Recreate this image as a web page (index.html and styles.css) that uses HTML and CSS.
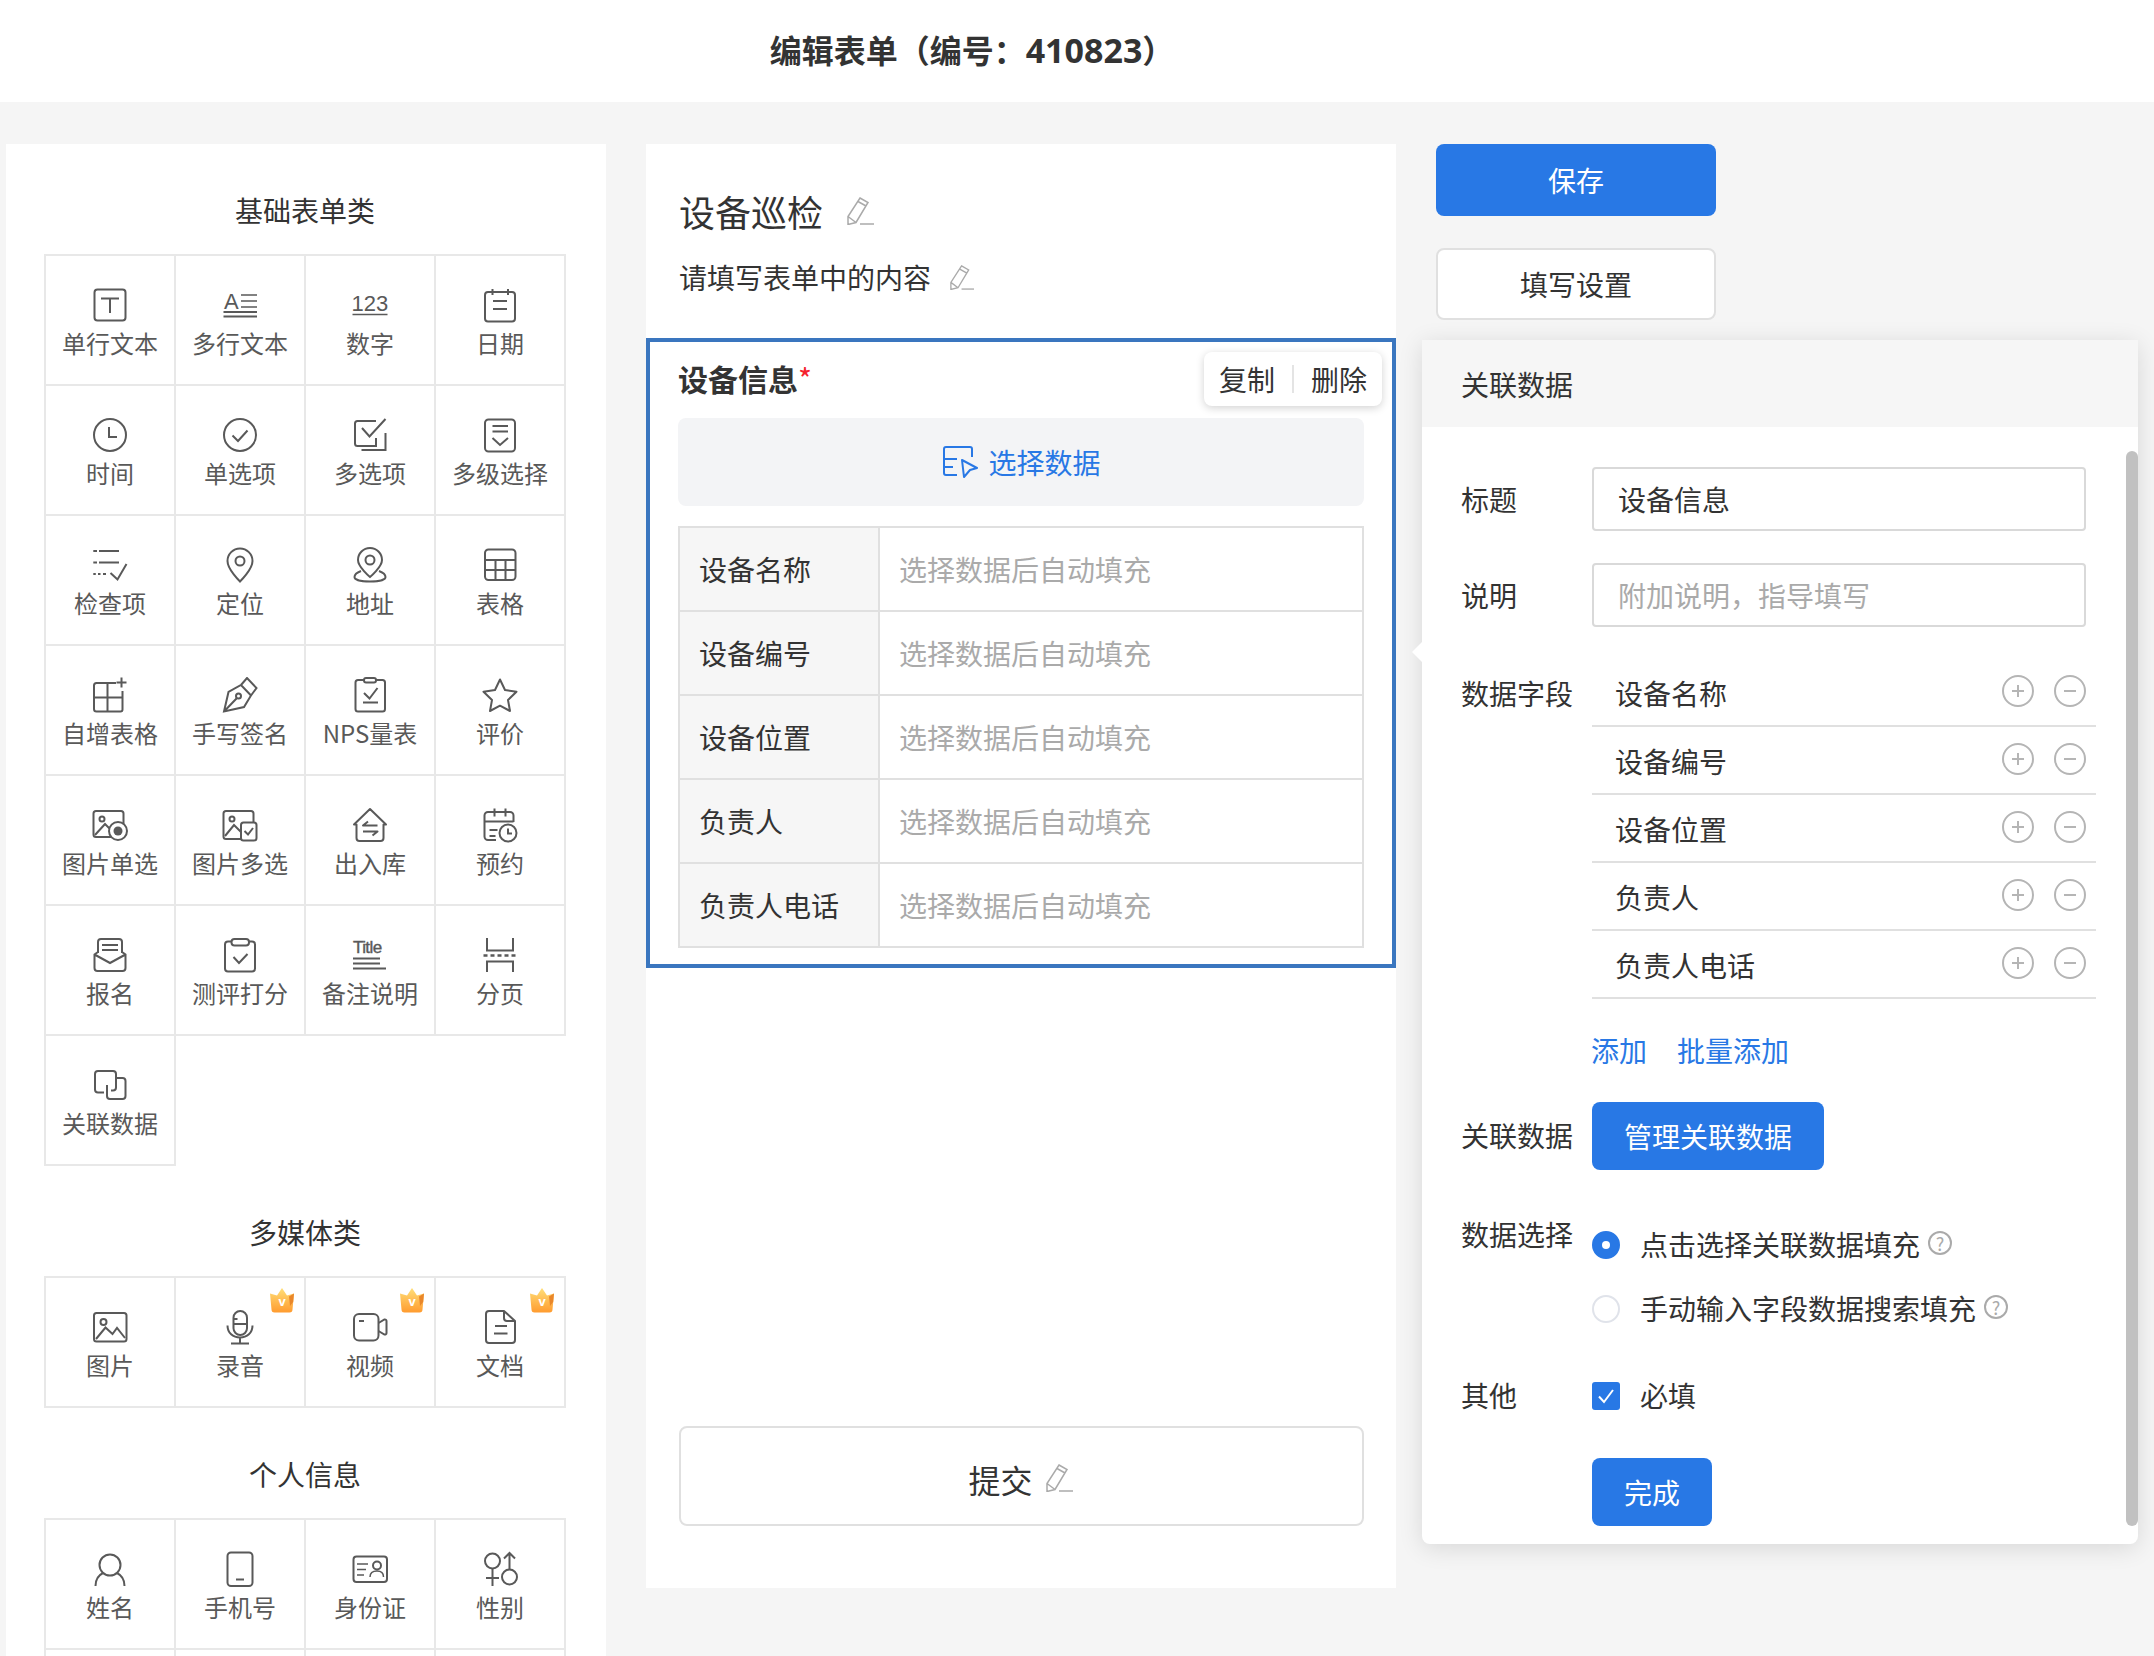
FILE: index.html
```html
<!DOCTYPE html>
<html lang="zh-CN">
<head>
<meta charset="utf-8">
<title>编辑表单</title>
<link rel="stylesheet" href="styles.css">
</head>
<body>
<header class="topbar"><h1 class="page-title">编辑表单（编号：<span class="num">410823</span>）</h1></header>
<main class="workspace">
  <aside class="palette">
    <section class="group">
      <h2 class="group-title">基础表单类</h2>
      <div class="grid">
        <div class="cell"><svg class="ic" viewBox="0 0 36 36"><rect x="2.5" y="2.5" width="31" height="31" rx="3"/><path d="M9 11.5h18M18 11.5v14.5"/></svg><span>单行文本</span></div>
        <div class="cell"><svg class="ic" viewBox="0 0 36 36"><text class="ic-text" x="2" y="21.5" font-size="22">A</text><path class="thin" d="M19 8h16M19 14h16M19 20h16"/><path d="M1.5 25h33.5M1.5 29.5h33.5"/></svg><span>多行文本</span></div>
        <div class="cell"><svg class="ic" viewBox="0 0 36 36"><text class="ic-text" x="-0.500" y="24" font-size="22">123</text><path class="thin" d="M0.5 27.500h35"/></svg><span>数字</span></div>
        <div class="cell"><svg class="ic" viewBox="0 0 36 36"><rect x="3" y="5" width="30" height="29.5" rx="3"/><path d="M10.5 2v6M26 2v6M11 14h14M11 22h14"/></svg><span>日期</span></div>

        <div class="cell"><svg class="ic" viewBox="0 0 36 36"><circle cx="18" cy="18" r="16"/><path d="M17 10v10h8"/></svg><span>时间</span></div>
        <div class="cell"><svg class="ic" viewBox="0 0 36 36"><circle cx="18" cy="18" r="16"/><path d="M10.5 18.5l5.5 5.5 9.5-10.5"/></svg><span>单选项</span></div>
        <div class="cell"><svg class="ic" viewBox="0 0 36 36"><path d="M24 4H5.5a2.5 2.5 0 0 0-2.5 2.5v20A2.5 2.5 0 0 0 5.5 29h18.500v-8M10 11l7.500 8.500L33.500 2M33.500 16v17h-24"/></svg><span>多选项</span></div>
        <div class="cell"><svg class="ic" viewBox="0 0 36 36"><rect x="3" y="2.500" width="30" height="32" rx="3.500"/><path d="M10.500 9h15.500M10.500 14.500h15.500M10.500 21l7.500 7 8-7"/></svg><span>多级选择</span></div>

        <div class="cell"><svg class="ic" viewBox="0 0 36 36"><path d="M1.300 4h3.700M7 4h20M1.300 15.500h3.700M7 15.500h20M1.300 27h2.500M6 27h2.500M11 27h3"/><path d="M18.500 26l7 6.500 9-15.500"/></svg><span>检查项</span></div>
        <div class="cell"><svg class="ic" viewBox="0 0 36 36"><path d="M18 34.500S5.500 22.500 5.500 14a12.500 12.500 0 0 1 25 0c0 8.500-12.500 20.500-12.500 20.500z"/><circle cx="18" cy="14" r="4.500"/></svg><span>定位</span></div>
        <div class="cell"><svg class="ic" viewBox="0 0 36 36"><path d="M18 30S6 20 6 13a12 12 0 0 1 24 0c0 7-12 17-12 17z"/><circle cx="18" cy="13" r="4.500"/><path d="M9 24c-4 1.500-6.500 3.500-6.500 6 0 3 7 4.500 15.500 4.500s15.500-1.500 15.500-4.500c0-2.500-2.500-4.500-6.500-6"/></svg><span>地址</span></div>
        <div class="cell"><svg class="ic" viewBox="0 0 36 36"><rect x="3" y="2.500" width="30.500" height="30.500" rx="3.500"/><path d="M3 13h30.500M3 23h30.500M13.500 13v20M23.500 13v20"/></svg><span>表格</span></div>

        <div class="cell"><svg class="ic" viewBox="0 0 36 36"><path d="M24 6H4.500A2.500 2.500 0 0 0 2 8.500v23.500a2.500 2.500 0 0 0 2.500 2.500h24a2 2 0 0 0 2-2V14M15.500 6v28.500M2 20.500h28.500M29.500 0.500v10M24.500 5.500h10"/></svg><span>自增表格</span></div>
        <div class="cell"><svg class="ic" viewBox="0 0 36 36"><path d="M2 34.500l4.500-19.500L19 8l10 10.500-7 11.500zM19 8l6-7 9.500 10-5.500 7.500M2 34.500l12.500-13"/><circle cx="16.500" cy="19" r="2.500"/></svg><span>手写签名</span></div>
        <div class="cell"><svg class="ic" viewBox="0 0 36 36"><rect x="3.500" y="3" width="29.500" height="31.500" rx="2.500"/><rect class="solid" x="12" y="1" width="12" height="4.500" rx="2"/><path d="M12 16l5.500 5.500 8-10.500M11 25.500h15"/></svg><span>NPS量表</span></div>
        <div class="cell"><svg class="ic" viewBox="0 0 36 36"><path stroke-linejoin="round" d="M18 2.500l5 10.500 11.500 1.700-8.500 8.300 2 11-10-5.300-10 5.300 2-11-8.500-8.300L13 13z"/></svg><span>评价</span></div>

        <div class="cell"><svg class="ic" viewBox="0 0 36 36"><rect x="1.500" y="4" width="30" height="26" rx="2.500"/><circle cx="10" cy="12" r="2.500"/><path d="M3 28l10-11 7 7"/><circle class="solid" cx="26" cy="24" r="9"/><circle class="dot" cx="26" cy="24" r="4.500"/></svg><span>图片单选</span></div>
        <div class="cell"><svg class="ic" viewBox="0 0 36 36"><rect x="1.500" y="4" width="30" height="28" rx="2.500"/><circle cx="10" cy="12" r="2.500"/><path d="M3 29l9-11 7 7"/><rect class="solid" x="19" y="15.500" width="15.500" height="18" rx="2.500"/><path d="M22.500 24l3.500 3.500 5-6.500"/></svg><span>图片多选</span></div>
        <div class="cell"><svg class="ic" viewBox="0 0 36 36"><path stroke-linejoin="round" d="M18 2l16 15.500h-2.500V31a3 3 0 0 1-3 3H7.500a3 3 0 0 1-3-3V17.500H2zM25.500 18.500H11l5-4M11 24.500h14.500l-5 4"/></svg><span>出入库</span></div>
        <div class="cell"><svg class="ic" viewBox="0 0 36 36"><path d="M14 33H6a3.500 3.500 0 0 1-3.500-3.500V8.500A3.500 3.500 0 0 1 6 5h22a3.500 3.500 0 0 1 3.500 3.500V15M12.500 1.500v8M23.500 1.500v8M2.500 14.500h29M7.500 23h8M7.500 29h6"/><circle class="solid" cx="26" cy="26" r="8.500"/><path d="M26 21.500v5h4"/></svg><span>预约</span></div>

        <div class="cell"><svg class="ic" viewBox="0 0 36 36"><path d="M6 16V5a3 3 0 0 1 3-3h18a3 3 0 0 1 3 3v11M10 8h16M10 13h16"/><path d="M6 15l-3.500 2.500V31a3 3 0 0 0 3 3h25a3 3 0 0 0 3-3V17.500L30 15M2.500 17.500L18 26l15.500-8.500"/></svg><span>报名</span></div>
        <div class="cell"><svg class="ic" viewBox="0 0 36 36"><rect x="3" y="4.500" width="30" height="30" rx="3"/><rect class="solid" x="9.500" y="2" width="17.500" height="6.500" rx="3"/><path d="M11.500 20l5.500 6 8.500-9"/></svg><span>测评打分</span></div>
        <div class="cell"><svg class="ic" viewBox="0 0 36 36"><text class="ic-title" x="1" y="16" font-size="17">Title</text><path d="M1 21.500h27M1 26.500h27M1 31.500h33"/></svg><span>备注说明</span></div>
        <div class="cell"><svg class="ic" viewBox="0 0 36 36"><path d="M5 1v12.500h26V1M5 35V24.500h26V35"/><path class="dash" d="M1.500 18.500h33"/></svg><span>分页</span></div>

        <div class="cell"><svg class="ic" viewBox="0 0 36 36"><path d="M12 25.500H6a3 3 0 0 1-3-3V7a3 3 0 0 1 3-3h15a3 3 0 0 1 3 3v13.500a3 3 0 0 1-3 3h-2"/><path d="M15 18v11a3 3 0 0 0 3 3h12.500a3 3 0 0 0 3-3V14a3 3 0 0 0-3-3H24"/></svg><span>关联数据</span></div>
      </div>
    </section>

    <section class="group">
      <h2 class="group-title">多媒体类</h2>
      <div class="grid">
        <div class="cell"><svg class="ic" viewBox="0 0 36 36"><rect x="2" y="4" width="32.500" height="28.500" rx="2.500"/><circle cx="11.500" cy="13" r="3"/><path d="M4 30l9.500-11.500 7 6.500 4.500-6 8 10"/></svg><span>图片</span></div>
        <div class="cell"><svg class="crown" viewBox="0 0 24 25"><defs><linearGradient id="crownA" x1="0" y1="0" x2="0" y2="1"><stop offset="0" stop-color="#ffdf78"/><stop offset="1" stop-color="#ff9b2f"/></linearGradient></defs><path fill="url(#crownA)" d="M12 0l5 7.500L24 5.500 22.500 21.500a3 3 0 0 1-3 3H4.500a3 3 0 0 1-3-3L0 5.500 7 7.500z"/><path fill="#e9862a" d="M19 8.500L24 5.500 23.200 14 20 18z"/><text class="crown-v" x="12" y="18">v</text></svg><svg class="ic" viewBox="0 0 36 36"><rect x="11.500" y="2" width="13.500" height="24" rx="6.700"/><path d="M11.500 10h4M11.500 15h13.500M5.500 16.500c0 7.500 5.500 12 12.500 12s12.500-4.500 12.500-12M18 28.500v6M9 34.500h18"/></svg><span>录音</span></div>
        <div class="cell"><svg class="crown" viewBox="0 0 24 25"><path fill="url(#crownA)" d="M12 0l5 7.500L24 5.500 22.500 21.500a3 3 0 0 1-3 3H4.500a3 3 0 0 1-3-3L0 5.500 7 7.500z"/><path fill="#e9862a" d="M19 8.500L24 5.500 23.200 14 20 18z"/><text class="crown-v" x="12" y="18">v</text></svg><svg class="ic" viewBox="0 0 36 36"><rect x="2" y="5" width="24.500" height="26.500" rx="5"/><path d="M26.500 14l6-3.500a1.500 1.500 0 0 1 2 1.500v12a1.500 1.500 0 0 1-2 1.500l-6-3.500M7 12h5"/></svg><span>视频</span></div>
        <div class="cell"><svg class="crown" viewBox="0 0 24 25"><path fill="url(#crownA)" d="M12 0l5 7.500L24 5.500 22.500 21.500a3 3 0 0 1-3 3H4.500a3 3 0 0 1-3-3L0 5.500 7 7.500z"/><path fill="#e9862a" d="M19 8.500L24 5.500 23.200 14 20 18z"/><text class="crown-v" x="12" y="18">v</text></svg><svg class="ic" viewBox="0 0 36 36"><path stroke-linejoin="round" d="M22 2H7a3 3 0 0 0-3 3v26a3 3 0 0 0 3 3h23a3 3 0 0 0 3-3V12zM22 2v7a3 3 0 0 0 3 3h8M13 17h12M12 24.500h13.500"/></svg><span>文档</span></div>
      </div>
    </section>

    <section class="group">
      <h2 class="group-title">个人信息</h2>
      <div class="grid">
        <div class="cell"><svg class="ic" viewBox="0 0 36 36"><circle cx="18" cy="14" r="10.500"/><path d="M3.500 35c0-7 3.500-11 7.500-13M32.500 35c0-7-3.500-11-7.500-13"/></svg><span>姓名</span></div>
        <div class="cell"><svg class="ic" viewBox="0 0 36 36"><rect x="5.500" y="1.500" width="25" height="33.500" rx="3.500"/><path d="M14 28.500h8"/></svg><span>手机号</span></div>
        <div class="cell"><svg class="ic" viewBox="0 0 36 36"><rect x="1.500" y="5.500" width="33.500" height="25.500" rx="3"/><path class="thin" d="M5 13h11M5 18.500h9M5 24h7M18 26c0-4 3-6 7-6s6.500 2 6.500 6"/><circle cx="25" cy="14.500" r="4"/></svg><span>身份证</span></div>
        <div class="cell"><svg class="ic" viewBox="0 0 36 36"><circle cx="10.500" cy="10" r="7.500"/><path d="M10.500 17.500V35M4 27h13"/><circle cx="27.500" cy="26" r="7.500"/><path d="M27.500 18.500V2M22 7.500l5.500-5.500 5.500 5.500"/></svg><span>性别</span></div>
        <div class="cell"></div><div class="cell"></div><div class="cell"></div><div class="cell"></div>
      </div>
    </section>
  </aside>

  <section class="canvas">
    <div class="canvas-head">
      <div class="form-name"><span>设备巡检</span><svg class="pencil" viewBox="0 0 27 28"><path d="M13 1l8 4.500L9 25.500 1 27.500V19.500zM11 4.500l8 4.500M1 19.500l8 6"/><path d="M13 27h14"/></svg></div>
      <div class="form-desc"><span>请填写表单中的内容</span><svg class="pencil small" viewBox="0 0 27 28"><path d="M13 1l8 4.500L9 25.500 1 27.500V19.500zM11 4.500l8 4.500M1 19.500l8 6"/><path d="M13 27h14"/></svg></div>
    </div>
    <div class="field-box">
      <div class="actions"><span>复制</span><i class="sep"></i><span>删除</span></div>
      <div class="field-title">设备信息<em class="req">*</em></div>
      <div class="pick"><svg class="pick-ic" viewBox="0 0 36 32"><path d="M29 11V3a2 2 0 0 0-2-2H3a2 2 0 0 0-2 2v24a2 2 0 0 0 2 2h11M1 13h13M1 21h9"/><path stroke-linejoin="round" d="M19 14l15 8-7 2-6 7z"/></svg><span>选择数据</span></div>
      <div class="data-table">
        <div class="dt-row"><div class="dt-key">设备名称</div><div class="dt-val">选择数据后自动填充</div></div>
        <div class="dt-row"><div class="dt-key">设备编号</div><div class="dt-val">选择数据后自动填充</div></div>
        <div class="dt-row"><div class="dt-key">设备位置</div><div class="dt-val">选择数据后自动填充</div></div>
        <div class="dt-row"><div class="dt-key">负责人</div><div class="dt-val">选择数据后自动填充</div></div>
        <div class="dt-row"><div class="dt-key">负责人电话</div><div class="dt-val">选择数据后自动填充</div></div>
      </div>
    </div>
    <div class="submit"><span>提交</span><svg class="pencil" viewBox="0 0 27 28"><path d="M13 1l8 4.500L9 25.500 1 27.500V19.500zM11 4.500l8 4.500M1 19.500l8 6"/><path d="M13 27h14"/></svg></div>
  </section>

  <section class="side">
    <button class="btn-save">保存</button>
    <button class="btn-settings">填写设置</button>
    <div class="props">
      <i class="props-arrow"></i>
      <div class="props-head">关联数据</div>
      <div class="props-body">
        <i class="scroll-thumb"></i>
        <div class="row row-title"><label class="lbl">标题</label><div class="input">设备信息</div></div>
        <div class="row row-desc"><label class="lbl">说明</label><div class="input placeholder">附加说明，指导填写</div></div>
        <div class="row row-fields">
          <label class="lbl lbl-field">数据字段</label>
          <div class="fields">
            <div class="f-row"><span>设备名称</span><div class="f-ops"><svg class="op" viewBox="0 0 32 32"><circle cx="16" cy="16" r="15"/><path d="M10 16h12M16 10v12"/></svg><svg class="op" viewBox="0 0 32 32"><circle cx="16" cy="16" r="15"/><path d="M10 16h12"/></svg></div></div>
            <div class="f-row"><span>设备编号</span><div class="f-ops"><svg class="op" viewBox="0 0 32 32"><circle cx="16" cy="16" r="15"/><path d="M10 16h12M16 10v12"/></svg><svg class="op" viewBox="0 0 32 32"><circle cx="16" cy="16" r="15"/><path d="M10 16h12"/></svg></div></div>
            <div class="f-row"><span>设备位置</span><div class="f-ops"><svg class="op" viewBox="0 0 32 32"><circle cx="16" cy="16" r="15"/><path d="M10 16h12M16 10v12"/></svg><svg class="op" viewBox="0 0 32 32"><circle cx="16" cy="16" r="15"/><path d="M10 16h12"/></svg></div></div>
            <div class="f-row"><span>负责人</span><div class="f-ops"><svg class="op" viewBox="0 0 32 32"><circle cx="16" cy="16" r="15"/><path d="M10 16h12M16 10v12"/></svg><svg class="op" viewBox="0 0 32 32"><circle cx="16" cy="16" r="15"/><path d="M10 16h12"/></svg></div></div>
            <div class="f-row"><span>负责人电话</span><div class="f-ops"><svg class="op" viewBox="0 0 32 32"><circle cx="16" cy="16" r="15"/><path d="M10 16h12M16 10v12"/></svg><svg class="op" viewBox="0 0 32 32"><circle cx="16" cy="16" r="15"/><path d="M10 16h12"/></svg></div></div>
          </div>
        </div>
        <div class="links"><a>添加</a><a>批量添加</a></div>
        <div class="row row-manage"><label class="lbl lift">关联数据</label><button class="btn-primary btn-manage">管理关联数据</button></div>
        <div class="row row-choice">
          <label class="lbl lift">数据选择</label>
          <div class="choices">
            <div class="choice"><i class="radio on"></i><span class="lift">点击选择关联数据填充</span><i class="help">?</i></div>
            <div class="choice"><i class="radio"></i><span class="lift">手动输入字段数据搜索填充</span><i class="help">?</i></div>
          </div>
        </div>
        <div class="row row-other"><label class="lbl lift">其他</label><div class="check-line"><svg class="check" viewBox="0 0 28 28"><rect width="28" height="28" rx="3"/><path d="M7 14.500l5 5.500 9-12"/></svg><span class="lift">必填</span></div></div>
        <button class="btn-primary btn-done">完成</button>
      </div>
    </div>
  </section>
</main>
</body>
</html>
```
FILE: styles.css
```css
* { box-sizing: border-box; }
html, body { margin: 0; height: 1656px; overflow: hidden; }
body {
  background: #f5f5f5;
  color: #333;
  font-family: "Noto Sans CJK SC", "Noto Sans", sans-serif;
  font-size: 28px;
  line-height: 40px;
}
button { font: inherit; border: 0; padding: 0; }
.lift { padding-bottom: 2px; }

.topbar { height: 102px; background: #fff; display: flex; align-items: center; justify-content: center; padding: 0 210px 3px 0; }
.page-title { margin: 0; font-size: 32px; font-weight: 700; line-height: 44px; color: #333; }
.num { font-family: "Noto Sans", sans-serif; font-size: 34px; }

.workspace { display: flex; align-items: flex-start; padding: 42px 0 0 6px; }

.palette { width: 600px; height: 1512px; background: #fff; padding: 0 40px 0 38px; flex: none; overflow: hidden; }
.group { padding-top: 47px; }
.group-title { margin: 0 0 25px; font-size: 28px; font-weight: 400; line-height: 38px; text-align: center; color: #333; }
.grid { display: grid; grid-template-columns: repeat(4, 130px); width: 522px; border-top: 2px solid #e8e8e8; border-left: 2px solid #e8e8e8; }
.cell { position: relative; height: 130px; border-right: 2px solid #e8e8e8; border-bottom: 2px solid #e8e8e8; display: flex; flex-direction: column; align-items: center; padding-top: 31px; font-size: 24px; line-height: 36px; color: #595959; }
.cell span { margin-top: 2px; white-space: nowrap; }
.ic { width: 36px; height: 36px; flex: none; fill: none; stroke: #595959; stroke-width: 2; }
.ic .thin { stroke-width: 1.5; }
.ic .solid { fill: #fff; }
.ic .dot { fill: #595959; stroke: none; }
.ic .dash { stroke-width: 2.5; stroke-dasharray: 4 3; }
.ic-text { font-family: "Liberation Sans", sans-serif; fill: #595959; stroke: none; }
.ic-title { font-family: "Liberation Sans", sans-serif; fill: #595959; stroke: #595959; stroke-width: .4; letter-spacing: -.6px; }
.crown { position: absolute; top: 10px; right: 10px; width: 24px; height: 25px; }
.crown-v { font-family: "Liberation Sans", sans-serif; font-size: 13px; font-weight: 700; fill: #fff; text-anchor: middle; }

.canvas { width: 750px; height: 1444px; margin-left: 40px; background: #fff; flex: none; }
.canvas-head { padding: 42px 32px 0 33px; height: 194px; }
.form-name { display: flex; align-items: center; font-size: 36px; line-height: 50px; color: #333; }
.form-desc { display: flex; align-items: center; margin-top: 21px; font-size: 28px; line-height: 40px; color: #333; }
.pencil { width: 27px; height: 28px; margin-left: 24px; fill: none; stroke: #aaa; stroke-width: 1.500; flex: none; }
.pencil.small { width: 24px; height: 25px; margin-left: 19px; }

.field-box { position: relative; height: 630px; border: 4px solid #3a76bf; padding: 16px 28px 0; }
.field-title { font-size: 30px; font-weight: 700; line-height: 40px; color: #333; }
.req { font-style: normal; font-weight: 400; color: #f5222d; }
.actions { position: absolute; top: 10px; right: 10px; width: 178px; height: 54px; background: #fff; border-radius: 8px; box-shadow: 0 2px 8px rgba(0,0,0,.18); display: flex; align-items: center; justify-content: center; gap: 17px; color: #333; }
.sep { width: 2px; height: 28px; background: #e4e4e4; }
.pick { margin-top: 20px; height: 88px; padding-left: 2px; background: #f3f4f6; border-radius: 8px; display: flex; align-items: center; justify-content: center; gap: 9px; color: #2878e5; }
.pick-ic { width: 36px; height: 32px; fill: none; stroke: #2878e5; stroke-width: 2; }
.data-table { margin-top: 20px; border: 2px solid #e0e0e0; border-bottom: 0; }
.dt-row { display: flex; height: 84px; border-bottom: 2px solid #e0e0e0; }
.dt-key { width: 200px; background: #f6f6f6; border-right: 2px solid #e0e0e0; padding-left: 19px; line-height: 82px; color: #333; }
.dt-val { padding-left: 19px; line-height: 82px; color: #aaa; }
.submit { margin: 458px 32px 0 33px; height: 100px; padding: 4px 2px 0 0; border: 2px solid #e0e0e0; border-radius: 8px; display: flex; align-items: center; justify-content: center; font-size: 32px; color: #333; }
.submit span { margin-top: 1px; }
.submit .pencil { margin-left: 13px; }

.side { width: 716px; margin-left: 26px; flex: none; display: flex; flex-direction: column; align-items: flex-start; }
.btn-save { width: 280px; height: 72px; margin-left: 14px; background: #2878e5; color: #fff; border-radius: 8px; }
.btn-settings { width: 280px; height: 72px; margin: 32px 0 0 14px; background: #fff; color: #333; border: 2px solid #e0e0e0; border-radius: 8px; }
.props { position: relative; width: 716px; margin-top: 20px; background: #fff; border-radius: 0 0 8px 8px; box-shadow: 0 4px 24px rgba(0,0,0,.12); }
.props-arrow { position: absolute; left: -10px; top: 302px; width: 0; height: 0; border-top: 10px solid transparent; border-bottom: 10px solid transparent; border-right: 10px solid #fff; }
.props-head { height: 87px; background: #f6f6f6; padding-left: 39px; line-height: 89px; color: #333; }
.props-body { position: relative; height: 1117px; padding: 40px 0 0 39px; }
.scroll-thumb { position: absolute; top: 24px; right: 0; bottom: 18px; width: 12px; border-radius: 6px; background: #c1c1c1; }

.row { display: flex; align-items: center; }
.lbl { width: 131px; flex: none; color: #333; }
.input { width: 494px; height: 64px; border: 2px solid #d9d9d9; border-radius: 4px; padding-left: 24px; line-height: 60px; color: #333; }
.input.placeholder { color: #aaa; }
.row-desc { margin-top: 32px; }
.row-fields { margin-top: 32px; align-items: flex-start; }
.lbl-field { line-height: 68px; }
.fields { width: 504px; }
.f-row { height: 68px; border-bottom: 2px solid #e0e0e0; display: flex; align-items: center; justify-content: space-between; padding: 2px 10px 0 23px; }
.f-ops { display: flex; gap: 20px; margin-top: -4px; }
.op { width: 32px; height: 32px; fill: none; stroke: #b5b5b5; stroke-width: 2; }
.links { margin: 31px 0 0 130px; padding-bottom: 2px; display: flex; gap: 30px; color: #2878e5; }
.row-manage { margin-top: 30px; }
.btn-primary { background: #2878e5; color: #fff; border-radius: 8px; height: 68px; }
.btn-manage { width: 232px; }
.row-choice { margin-top: 44px; align-items: flex-start; }
.choices { margin-top: 11px; display: flex; flex-direction: column; gap: 24px; }
.choice { display: flex; align-items: center; height: 40px; }
.radio { width: 28px; height: 28px; border-radius: 50%; border: 2px solid #e0e3ea; margin-right: 20px; flex: none; display: flex; align-items: center; justify-content: center; }
.radio.on { background: #2878e5; border-color: #2878e5; }
.radio.on::after { content: ""; width: 8px; height: 8px; border-radius: 50%; background: #fff; }
.help { width: 24px; height: 24px; margin: -4px 0 0 8px; border: 2px solid #aaa; border-radius: 50%; font-style: normal; font-size: 18px; line-height: 20px; text-align: center; color: #aaa; flex: none; }
.row-other { margin-top: 46px; }
.check-line { display: flex; align-items: center; gap: 20px; }
.check { width: 28px; height: 28px; flex: none; fill: #2878e5; }
.check path { fill: none; stroke: #fff; stroke-width: 2; }
.btn-done { width: 120px; margin: 41px 0 0 131px; display: block; }
```
